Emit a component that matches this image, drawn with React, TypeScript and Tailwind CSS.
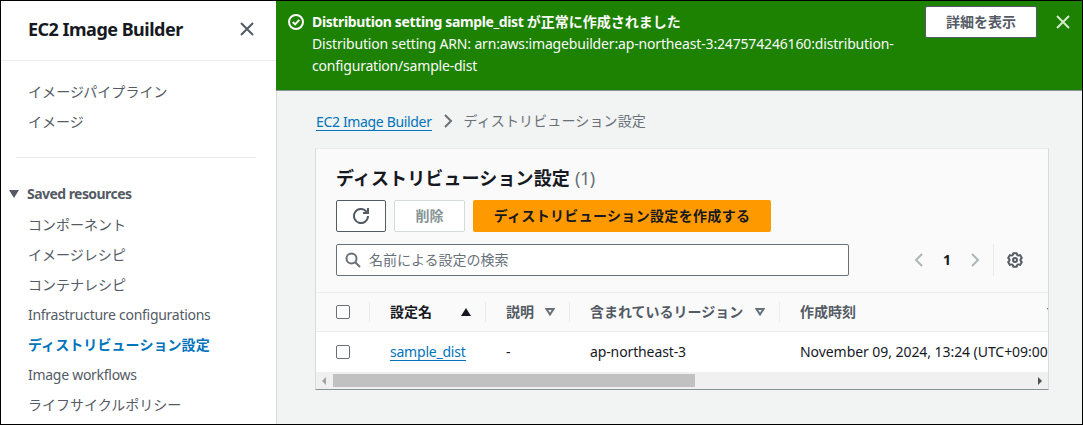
import React from 'react';

const savedResources = [
  { label: 'コンポーネント' },
  { label: 'イメージレシピ' },
  { label: 'コンテナレシピ' },
  { label: 'Infrastructure configurations', style: 'tracking-[-0.28px]' },
  { label: 'ディストリビューション設定', style: 'font-bold tracking-[0.08px] text-[#0073bb]' },
  { label: 'Image workflows', style: 'tracking-[-0.28px]' },
  { label: 'ライフサイクルポリシー' },
];

function CloseIcon({ className }: { className: string }) {
  return (
    <svg viewBox="0 0 16 16" className={className} fill="none" stroke="currentColor" strokeWidth="2">
      <path d="M2 2l12 12M14 2L2 14" />
    </svg>
  );
}

function Chevron({ className, left = false }: { className: string; left?: boolean }) {
  return (
    <svg viewBox="0 0 16 16" className={className} fill="none" stroke="currentColor" strokeWidth="2">
      <path d={left ? 'M11 2L5 8l6 6' : 'M5 2l6 6-6 6'} />
    </svg>
  );
}

function SortIcon() {
  return (
    <svg viewBox="0 0 10 8" className="h-2 w-2.5 shrink-0 text-[#687078]" fill="none" stroke="currentColor" strokeWidth="2">
      <path d="M1.5 1h7L5 6.5z" />
    </svg>
  );
}

function Checkbox() {
  return <span className="block size-3.5 shrink-0 rounded-[2px] border border-[#687078] bg-white" />;
}

function Sidebar() {
  return (
    <aside className="flex w-[275px] shrink-0 flex-col bg-white">
      <div className="flex h-[60px] shrink-0 items-center border-b border-[#eaeded] pr-[21px] pb-[3px] pl-[27px]">
        <h2 className="flex-1 text-[18px] font-bold tracking-[-0.51px] text-[#16191f]">EC2 Image Builder</h2>
        <CloseIcon className="size-4 text-[#545b64]" />
      </div>
      <nav className="flex flex-col pt-4 text-[#545b64]">
        <a className="h-[30px] pl-[27px] leading-[30px] tracking-[0.08px]">イメージパイプライン</a>
        <a className="h-[30px] pl-[27px] leading-[30px]">イメージ</a>
        <hr className="mt-5 mr-5 ml-[15px] border-[#eaeded]" />
        <div className="mt-[21px] mb-px flex h-[30px] items-center pl-2">
          <svg viewBox="0 0 10 8" className="mr-2 h-2 w-2.5 fill-[#545b64]">
            <path d="M0 0h10L5 8z" />
          </svg>
          <span className="font-bold tracking-[-0.55px]">Saved resources</span>
        </div>
        {savedResources.map((item) => (
          <a key={item.label} className={`h-[30px] pl-[27px] leading-[30px] ${item.style ?? ''}`}>
            {item.label}
          </a>
        ))}
      </nav>
    </aside>
  );
}

function Flash() {
  return (
    <div className="flex h-[90px] shrink-0 items-start border-b border-[#879596] bg-[#1d8102] pl-3 text-[#fafafa]">
      <svg viewBox="0 0 16 16" className="mt-[13px] size-4 shrink-0" fill="none" stroke="currentColor" strokeWidth="2">
        <circle cx="8" cy="8" r="7" />
        <path d="M4.8 8l2.3 2.4 4.2-4.6" />
      </svg>
      <div className="ml-2 w-[613px] pt-2.5 leading-[22px] whitespace-nowrap">
        <p className="h-[22px] font-bold">
          <span className="tracking-[-0.37px]">Distribution setting sample_dist </span>が正常に作成されました
        </p>
        <p className="h-[22px] tracking-[-0.16px]">Distribution setting ARN: arn:aws:imagebuilder:ap-northeast-3:247574246160:distribution-</p>
        <p className="h-[22px] tracking-[-0.2px]">configuration/sample-dist</p>
      </div>
      <button className="mt-[5px] h-8 w-28 shrink-0 rounded-[2px] border border-[#545b64] bg-white font-bold text-[#545b64]">
        詳細を表示
      </button>
      <CloseIcon className="mt-[13px] ml-[18px] size-4 shrink-0 text-[#d5e8d0]" />
    </div>
  );
}

function Toolbar() {
  return (
    <div className="flex h-[144px] shrink-0 flex-col border-b border-[#eaeded] px-5">
      <h1 className="mt-[15px] flex h-7 items-center gap-[5px] text-[18px] font-bold tracking-[0.12px] text-[#16191f]">
        ディストリビューション設定
        <span className="font-normal tracking-[-0.4px] text-[#687078]">(1)</span>
      </h1>
      <div className="mt-2 flex h-8 gap-2">
        <button className="flex w-[50px] items-center justify-center rounded-[2px] border border-[#545b64] bg-white text-[#545b64]">
          <svg viewBox="0 0 16 16" className="size-4" fill="none" stroke="currentColor" strokeWidth="2">
            <path d="M15 8a7 7 0 1 1-1.8-4.7L15 5" />
            <path d="M10 5h5V0" />
          </svg>
        </button>
        <button className="w-[71px] rounded-[2px] border border-[#d5dbdb] bg-white font-bold text-[#879596]">削除</button>
        <button className="w-[298px] rounded-[2px] bg-[#ff9900] font-bold tracking-[0.33px] text-[#16191f]">
          ディストリビューション設定を作成する
        </button>
      </div>
      <div className="mt-3 flex h-8 items-center">
        <div className="flex h-8 w-[513px] items-center rounded-[2px] border border-[#687078] bg-white pl-2">
          <svg viewBox="0 0 16 16" className="mr-2 size-4 text-[#687078]" fill="none" stroke="currentColor" strokeWidth="2">
            <circle cx="6.5" cy="6.5" r="5" />
            <path d="M10.2 10.2L15 15" />
          </svg>
          <span className="text-[#687078]">名前による設定の検索</span>
        </div>
        <Chevron left className="ml-[62px] size-4 text-[#aab7b8]" />
        <span className="w-10 text-center font-bold text-[#16191f]">1</span>
        <Chevron className="size-4 text-[#aab7b8]" />
        <div className="ml-2.5 h-8 w-px bg-[#eaeded]" />
        <svg viewBox="0 0 16 16" className="ml-[13px] size-4 text-[#545b64]" fill="none" stroke="currentColor" strokeWidth="2" strokeLinejoin="round">
          <path d="M6.3 1.2h3.4l.5 1.8 1 .6 1.9-.5 1.7 2.9-1.3 1.400v1.200l1.300 1.400-1.700 2.900-1.900-.5-1 .6-.5 1.800H6.300l-.5-1.800-1-.6-1.900.5L1.200 10l1.300-1.400V7.400L1.200 6l1.700-2.900 1.900.5 1-.6z" />
          <circle cx="8" cy="8" r="2" />
        </svg>
      </div>
    </div>
  );
}

function Divider() {
  return <span className="h-5 w-px shrink-0 bg-[#eaeded]" />;
}

function Table() {
  return (
    <div className="flex flex-col overflow-hidden whitespace-nowrap">
      <div className="flex h-[39px] shrink-0 items-center border-b border-[#eaeded] font-bold text-[#545b64]">
        <div className="flex w-[53px] shrink-0 pl-5"><Checkbox /></div>
        <Divider />
        <div className="flex w-[115px] shrink-0 items-center justify-between pr-3.5 pl-5 text-[#16191f]">
          設定名
          <svg viewBox="0 0 10 8" className="h-2 w-2.5 fill-current"><path d="M0 8h10L5 0z" /></svg>
        </div>
        <Divider />
        <div className="flex w-[83px] shrink-0 items-center justify-between pr-3.5 pl-5">説明<SortIcon /></div>
        <Divider />
        <div className="flex w-[209px] shrink-0 items-center justify-between pr-3.5 pl-5">含まれているリージョン<SortIcon /></div>
        <Divider />
        <div className="flex w-[295px] shrink-0 items-center justify-between pr-[18px] pl-5">作成時刻<SortIcon /></div>
      </div>
      <div className="flex h-10 shrink-0 items-center bg-white text-[#16191f]">
        <div className="w-[74px] shrink-0 pl-5"><Checkbox /></div>
        <div className="w-[116px] shrink-0">
          <a className="inline-block h-[19px] border-b border-[#0073bb] leading-[19px] tracking-[-0.22px] text-[#0073bb]">sample_dist</a>
        </div>
        <div className="w-[84px] shrink-0">-</div>
        <div className="w-[210px] shrink-0 tracking-[-0.12px]">ap-northeast-3</div>
        <div className="shrink-0 tracking-[-0.06px]">November 09, 2024, 13:24 (UTC+09:00)</div>
      </div>
      <div className="flex h-[17px] shrink-0 items-center bg-[#f0f0f0] px-1.5">
        <svg viewBox="0 0 4 8" className="h-2 w-1 fill-[#a3a3a3]"><path d="M4 0v8L0 4z" /></svg>
        <div className="ml-[7px] h-[13px] w-[362px] bg-[#c1c1c1]" />
        <svg viewBox="0 0 4 8" className="ml-auto h-2 w-1 fill-[#505050]"><path d="M0 0v8l4-4z" /></svg>
      </div>
    </div>
  );
}

export default function App() {
  return (
    <div className="flex h-[425px] w-[1083px] overflow-hidden border border-black bg-[#f2f3f3] font-['Noto_Sans','Noto_Sans_CJK_JP',sans-serif] text-[14px] leading-[22px]">
      <Sidebar />
      <main className="flex min-w-0 flex-1 flex-col">
        <Flash />
        <div className="flex flex-1 flex-col border-l border-[#d5dbdb] pr-[33px] pl-[38px]">
          <div className="mt-[19px] flex h-[22px] items-center pl-px">
            <a className="h-[19px] border-b border-[#0073bb] leading-[19px] tracking-[-0.34px] text-[#0073bb]">EC2 Image Builder</a>
            <Chevron className="mx-2 size-4 text-[#687078]" />
            <span className="tracking-[0.12px] text-[#687078]">ディストリビューション設定</span>
          </div>
          <section className="mt-4 flex h-[242px] flex-col overflow-hidden border border-t-[#eaeded] border-r-[#d5dbdb] border-b-[#879596] border-l-[#d5dbdb] bg-[#fafafa]">
            <Toolbar />
            <Table />
          </section>
        </div>
      </main>
    </div>
  );
}
